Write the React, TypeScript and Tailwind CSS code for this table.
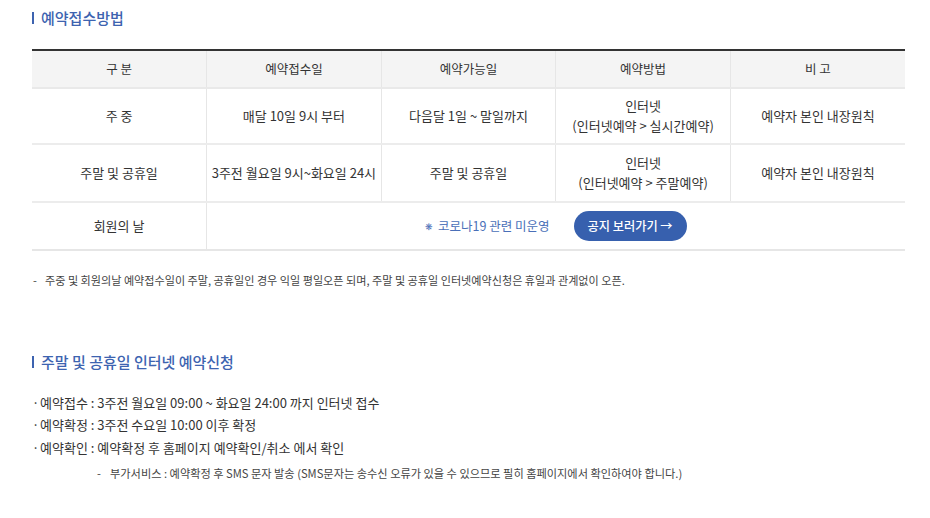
import React from "react";

const font = { fontFamily: '"Noto Sans CJK KR", "Noto Sans", sans-serif' };

export default function App() {
  const td = "border-r border-[#e6e6e6] last:border-r-0 text-center align-middle";
  return (
    <div className="w-[930px] h-[518px] bg-white text-[#333] overflow-hidden" style={font}>
      <div className="pl-[32px] pr-[25px] pt-[8px]">
        <h2 className="text-[15px] font-medium text-[#3d63b0] leading-[20px] flex items-center">
          <span className="inline-block w-[2px] h-[12px] bg-[#3d63b0] mr-[7px]"></span>
          예약접수방법
        </h2>
        <table className="mt-[21px] w-[873px] table-fixed border-collapse text-[13px] text-[#333] border-t-2 border-[#333]">
          <thead>
            <tr className="h-[38px] bg-[#f4f4f4] border-b-2 border-[#e9e9e9] text-[12.5px]">
              <th className={td + " font-normal"}>구 분</th>
              <th className={td + " font-normal"}>예약접수일</th>
              <th className={td + " font-normal"}>예약가능일</th>
              <th className={td + " font-normal"}>예약방법</th>
              <th className={td + " font-normal"}>비 고</th>
            </tr>
          </thead>
          <tbody>
            <tr className="h-[56px] border-b-2 border-[#ececec]">
              <td className={td}>주 중</td>
              <td className={td}>매달 10일 9시 부터</td>
              <td className={td}>다음달 1일 ~ 말일까지</td>
              <td className={td + " leading-[20px]"}>인터넷<br />(인터넷예약 &gt; 실시간예약)</td>
              <td className={td}>예약자 본인 내장원칙</td>
            </tr>
            <tr className="h-[58px] border-b-2 border-[#ececec]">
              <td className={td}>주말 및 공휴일</td>
              <td className={td}>3주전 월요일 9시~화요일 24시</td>
              <td className={td}>주말 및 공휴일</td>
              <td className={td + " leading-[20px]"}>인터넷<br />(인터넷예약 &gt; 주말예약)</td>
              <td className={td}>예약자 본인 내장원칙</td>
            </tr>
            <tr className="h-[48px] border-b-2 border-[#e6e6e6]">
              <td className={td}>회원의 날</td>
              <td colSpan={4} className="align-middle">
                <div className="flex items-center pl-[218px] gap-[24px]">
                  <span className="text-[#4a6fb8] text-[12.5px]">
                    <span className="text-[9px] mr-[5px] align-middle">❋</span>코로나19 관련 미운영
                  </span>
                  <span className="inline-flex items-center h-[30px] px-[14px] rounded-full bg-[#3760ae] text-white font-medium text-[12.2px]">
                    공지 보러가기 →
                  </span>
                </div>
              </td>
            </tr>
          </tbody>
        </table>
        <p className="mt-[21px] text-[11.1px] text-[#444] flex">
          <span className="w-[13px] pl-[1px]">-</span>
          <span>주중 및 회원의날 예약접수일이 주말, 공휴일인 경우 익일 평일오픈 되며, 주말 및 공휴일 인터넷예약신청은 휴일과 관계없이 오픈.</span>
        </p>
        <h2 className="mt-[63px] text-[15px] font-medium text-[#3d63b0] leading-[20px] flex items-center">
          <span className="inline-block w-[2px] h-[12px] bg-[#3d63b0] mr-[7px]"></span>
          주말 및 공휴일 인터넷 예약신청
        </h2>
        <ul className="mt-[20px] text-[13px] text-[#333] leading-[22.5px]">
          <li className="flex"><span className="w-[8px]">·</span>예약접수 : 3주전 월요일 09:00 ~ 화요일 24:00 까지 인터넷 접수</li>
          <li className="flex"><span className="w-[8px]">·</span>예약확정 : 3주전 수요일 10:00 이후 확정</li>
          <li className="flex"><span className="w-[8px]">·</span>예약확인 : 예약확정 후 홈페이지 예약확인/취소 에서 확인</li>
        </ul>
        <p className="mt-[6px] pl-[65px] text-[11.2px] text-[#444] flex">
          <span className="w-[13px]">-</span>
          <span>부가서비스 : 예약확정 후 SMS 문자 발송 (SMS문자는 송수신 오류가 있을 수 있으므로 필히 홈페이지에서 확인하여야 합니다.)</span>
        </p>
      </div>
    </div>
  );
}
